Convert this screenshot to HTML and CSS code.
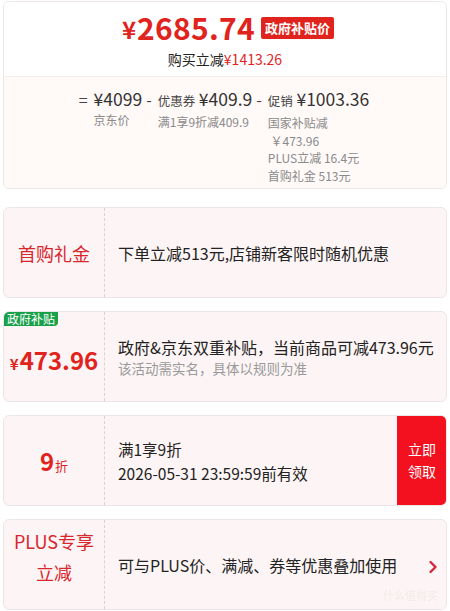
FILE: index.html
```html
<!DOCTYPE html>
<html lang="zh">
<head>
<meta charset="utf-8">
<link rel="stylesheet" href="styles.css">
</head>
<body>
<div class="page">
  <section class="card summary">
    <div class="summary-top">
      <div class="price-line">
        <span class="yen">¥</span><span class="price">2685.74</span><span class="gov-tag">政府补贴价</span>
      </div>
      <div class="save-line">购买立减<span class="red">¥1413.26</span></div>
    </div>
    <div class="summary-bottom">
      <span class="op">=</span>
      <div class="col">
        <div class="head"><span class="amt">¥4099</span></div>
        <div class="sub">京东价</div>
      </div>
      <span class="op">-</span>
      <div class="col">
        <div class="head"><span class="lbl">优惠券</span> <span class="amt">¥409.9</span></div>
        <div class="sub">满1享9折减409.9</div>
      </div>
      <span class="op">-</span>
      <div class="col">
        <div class="head"><span class="lbl">促销</span> <span class="amt">¥1003.36</span></div>
        <div class="sub tall">国家补贴减</div>
        <div class="sub tall">&nbsp;￥473.96</div>
        <div class="sub near">PLUS立减 16.4元</div>
        <div class="sub">首购礼金 513元</div>
      </div>
    </div>
  </section>

  <section class="card coupon">
    <div class="c-left"><span class="c-title">首购礼金</span></div>
    <div class="c-right"><div class="c-main">下单立减513元,店铺新客限时随机优惠</div></div>
  </section>

  <section class="card coupon">
    <span class="green-tag">政府补贴</span>
    <div class="c-left"><span class="gov-amt"><span class="gy">¥</span>473.96</span></div>
    <div class="c-right">
      <div class="c-main">政府&amp;京东双重补贴，当前商品可减473.96元</div>
      <div class="c-note">该活动需实名，具体以规则为准</div>
    </div>
  </section>

  <section class="card coupon">
    <div class="c-left"><span class="disc"><span class="dn">9</span><span class="dz">折</span></span></div>
    <div class="c-right">
      <div class="c-line">满1享9折</div>
      <div class="c-line">2026-05-31 23:59:59前有效</div>
    </div>
    <button class="get-btn">立即<br>领取</button>
  </section>

  <section class="card coupon">
    <div class="c-left plus-cell"><span class="c-title plus">PLUS专享<br>立减</span></div>
    <div class="c-right"><div class="c-main">可与PLUS价、满减、券等优惠叠加使用</div></div>
    <svg class="chev" width="10" height="14" viewBox="0 0 10 14"><polyline points="2.5,2 7.5,7 2.5,12" fill="none" stroke="#d8263a" stroke-width="2.4" stroke-linecap="round" stroke-linejoin="round"/></svg>
    <span class="wm">什么值得买</span>
  </section>
</div>
</body>
</html>
```
FILE: styles.css
```css
* { box-sizing: border-box; }
html, body { margin: 0; padding: 0; background: #fff; }
body {
  font-family: "Noto Sans CJK SC", "Noto Sans", sans-serif;
  color: #222;
  overflow: hidden;
}
.page {
  padding: 1px 3px 0 3px;
  display: flex;
  flex-direction: column;
  gap: 13px;
}
.card {
  border: 1px solid #ece6e6;
  border-radius: 6px;
  background: #fdf5f5;
  width: 444px;
  overflow: hidden;
}
.red { color: #e1231e; }

/* summary */
.summary { background: #fff; margin-bottom: 5px; }
.summary-top {
  height: 75px;
  display: flex;
  flex-direction: column;
  align-items: center;
  padding-top: 5px;
  background: #fff;
  border-bottom: 1px solid #f7ebeb;
}
.price-line {
  display: flex;
  align-items: center;
  color: #e1231e;
  font-weight: 700;
  height: 40px;
  line-height: 40px;
  padding-left: 6px;
}
.yen { font-size: 24px; margin-right: 1px; margin-top: 3px; }
.price { font-size: 30px; letter-spacing: 0.3px; }
.gov-tag {
  margin-left: 6px;
  background: #e1231e;
  color: #fff;
  font-size: 13px;
  font-weight: 700;
  line-height: 22px;
  padding: 0 4px;
  border-radius: 2px;
  margin-top: 2px;
}
.save-line {
  font-size: 14px;
  line-height: 20px;
  margin-top: 2px;
  color: #222;
}
.summary-bottom {
  background: #fff9f8;
  height: 111px;
  display: flex;
  justify-content: center;
  align-items: flex-start;
  gap: 4px;
  padding-top: 9px;
  padding-right: 2px;
}
.op { font-size: 16px; line-height: 26px; color: #444; }
.op + .col { margin-left: 2px; }
.col { display: flex; flex-direction: column; }
.head { line-height: 26px; white-space: nowrap; color: #333; }
.amt { font-size: 17.5px; color: #333; }
.lbl { font-size: 12.5px; color: #444; }
.sub {
  font-size: 12px;
  color: #8a8a8a;
  line-height: 15px;
  margin-top: 3px;
  white-space: nowrap;
}
.col .sub:nth-child(2) { margin-top: 0; }
.col .sub.tall { line-height: 17.5px; margin-top: 0; }
.col .sub.near { margin-top: 1px; }

/* coupon cards */
.coupon {
  height: 91px;
  display: flex;
  position: relative;
}
.c-left {
  width: 101px;
  flex: none;
  border-right: 1px dashed #ddd0d0;
  display: flex;
  align-items: center;
  justify-content: center;
}
.plus-cell { padding-bottom: 16px; }
.c-right {
  flex: 1;
  display: flex;
  flex-direction: column;
  justify-content: center;
  padding-left: 13px;
}
.c-title { color: #d9262c; font-size: 18px; line-height: 30px; text-align: center; }
.c-main { font-size: 16px; line-height: 22px; color: #222; white-space: nowrap; }
.c-note { font-size: 13.5px; line-height: 20px; color: #999; margin-top: 0; }
.c-line { font-size: 15.5px; line-height: 24px; color: #222; }
.green-tag {
  position: absolute;
  left: 0; top: 0;
  background: #19a14a;
  color: #fff;
  font-size: 12px;
  line-height: 14px;
  padding: 0 3px;
  border-radius: 0 0 4px 0;
}
.gov-amt { color: #e1231e; font-weight: 700; font-size: 24px; margin-top: 6px; }
.gy { font-size: 15px; margin-right: 1px; }
.disc { color: #e1231e; font-weight: 700; }
.dn { font-size: 24px; }
.dz { font-size: 13px; font-weight: 400; margin-left: 1px; }
.get-btn {
  width: 50px;
  flex: none;
  margin: -1px -1px -1px 0;
  border: 0;
  background: #f3111f;
  color: #fff;
  font-family: inherit;
  font-size: 14px;
  line-height: 22px;
  padding: 0 0 2px 0;
  border-radius: 0 6px 6px 0;
}
.plus { line-height: 31px; }
.chev { position: absolute; right: 8px; top: 40px; }
.wm {
  position: absolute;
  right: 8px;
  bottom: 6px;
  font-size: 11px;
  color: #f4eaea;
}
```
